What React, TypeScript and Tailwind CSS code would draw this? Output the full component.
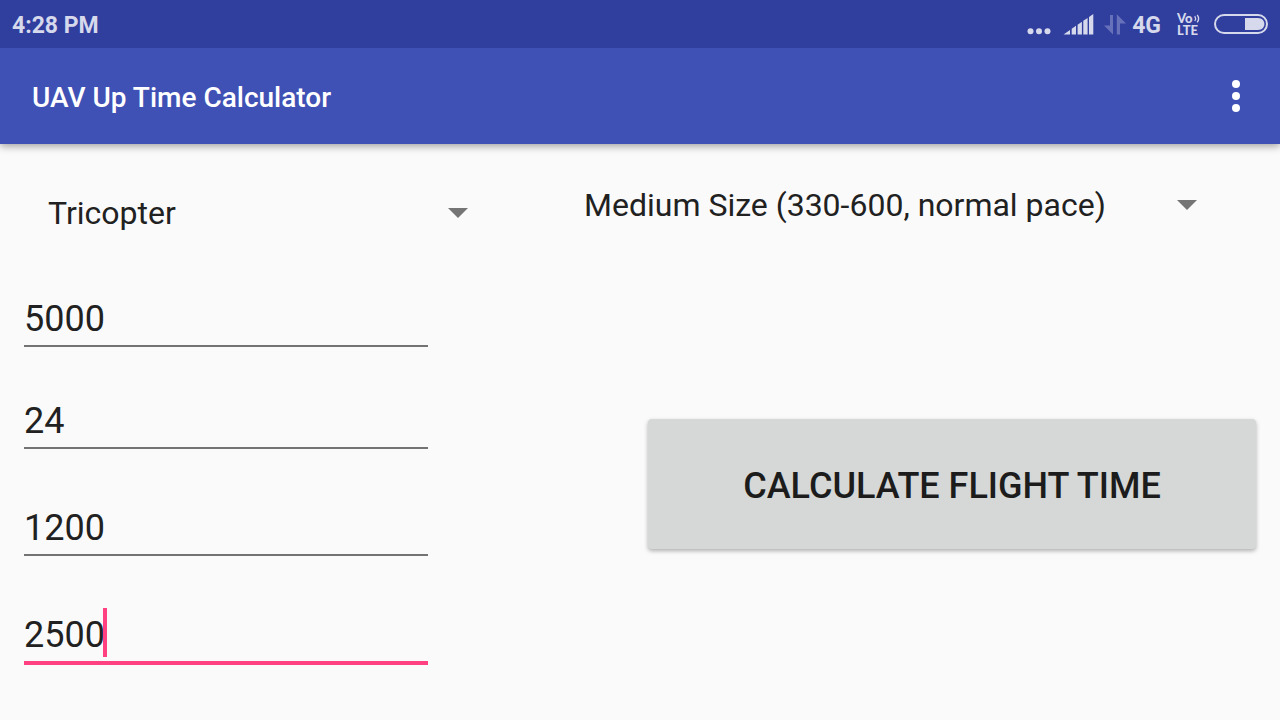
import { useState } from "react"

interface SpinnerProps {
  label: string;
  options: string[];
  className?: string;
}

interface NumberFieldProps {
  label: string;
  value: string;
  active: boolean;
  className?: string;
  onFocus: () => void;
  onChange: (value: string) => void;
}

const copterTypes = ["Tricopter", "Quadcopter", "Hexacopter", "Octocopter"]

const frameSizes = [
  "Medium Size (330-600, normal pace)",
  "Small Size (below 330, fast pace)",
  "Large Size (above 600, slow pace)",
]

function StatusBar() {
  return (
    <div className="relative z-10 flex h-12 items-center justify-between bg-[#303e9e] px-3 text-[#d6d9ec]">
      <span className="pt-1 text-[23px] font-bold">4:28 PM</span>
      <div className="flex items-center">
        <svg className="mr-3" width="24" height="24" viewBox="0 0 24 24" fill="currentColor" aria-hidden="true">
          <circle cx="3.5" cy="19.3" r="3" />
          <circle cx="12" cy="19.3" r="3" />
          <circle cx="20.5" cy="19.3" r="3" />
        </svg>
        <svg className="mr-2.5" width="31" height="24" viewBox="0 0 31 24" fill="currentColor" aria-hidden="true">
          <path d="M0.5 22.5L7 18V22.5ZM8.7 16.8L13 13.8V22.5H8.7ZM14.6 12.7L18.9 9.8V22.5H14.6ZM20.3 8.8L24.6 5.9V22.5H20.3ZM26 4.9L30.3 2V22.5H26Z" />
        </svg>
        <svg className="mr-1.5" width="22" height="24" viewBox="0 0 22 24" fill="#6771b9" aria-hidden="true">
          <path d="M0 13.6H6V3H9V22.4ZM12.8 22.4H16V11.4H22L12.8 2.2Z" />
        </svg>
        <span className="pt-1 text-[23px] font-bold">4G</span>
        <svg className="mr-3 ml-4 overflow-visible" width="25" height="24" viewBox="0 0 25 24" fill="currentColor" aria-hidden="true">
          <text fontSize="13" fontWeight="900" fontFamily="Lato, sans-serif">
            <tspan x="0" y="11">Vo</tspan>
            <tspan x="0" y="23">LTE</tspan>
          </text>
          <path d="M17.8 4.2Q19.4 6.6 17.8 9M20.2 2.8Q23 6.6 20.2 10.4" fill="none" stroke="currentColor" strokeWidth="1.3" />
        </svg>
        <svg width="54" height="24" viewBox="0 0 54 24" fill="none" aria-hidden="true">
          <rect x="1" y="3" width="52" height="18" rx="9" stroke="currentColor" strokeWidth="2" />
          <path d="M31 6H44C48 6 50.4 8.8 50.4 12S48 18 44 18H31Z" fill="currentColor" />
        </svg>
      </div>
    </div>
  )
}

function Spinner({ label, options, className }: SpinnerProps) {
  return (
    <div className={`relative ${className}`}>
      <select
        aria-label={label}
        className="h-12 w-full appearance-none bg-transparent pr-10 pl-4 text-[32px] leading-[48px] text-[#212121] outline-none"
      >
        {options.map((option) => (
          <option key={option}>{option}</option>
        ))}
      </select>
      <svg className="pointer-events-none absolute top-[19px] right-3" width="20" height="10" viewBox="0 0 20 10" aria-hidden="true">
        <path d="M0 0H20L10 10Z" fill="#757575" />
      </svg>
    </div>
  )
}

function NumberField({ label, value, active, className, onFocus, onChange }: NumberFieldProps) {
  return (
    <div
      className={`relative pb-1 text-4xl text-[#212121] ${
        active ? "border-b-4 border-[#ff4081]" : "border-b-2 border-[#737373]"
      } ${className}`}
    >
      <input
        type="text"
        inputMode="numeric"
        aria-label={label}
        className="block h-[49px] w-full bg-transparent pt-1 leading-[45px] caret-transparent outline-none"
        value={value}
        onFocus={onFocus}
        onChange={(e) => onChange(e.target.value)}
      />
      {active && (
        // One digit is exactly 1ch wide
        <span
          className="pointer-events-none absolute top-0 -ml-0.5 h-[49px] w-1 bg-[#ff4081]"
          style={{ left: `${value.length}ch` }}
        />
      )}
    </div>
  )
}

export default function App() {
  const [values, setValues] = useState(["5000", "24", "1200", "2500"])
  const [active, setActive] = useState(3)

  const fields = [
    { label: "Battery capacity (mAh)", className: "" },
    { label: "Propulsion (A)", className: "mt-[47px]" },
    { label: "Frame weight (g)", className: "mt-[52px]" },
    { label: "Payload weight (g)", className: "mt-[52px]" },
  ]

  const handleChange = (index: number, value: string) => {
    setValues(values.map((v, i) => (i === index ? value : v)))
  }

  return (
    <div className="flex min-h-screen flex-col bg-[#fafafa] font-[Roboto,sans-serif]">
      <StatusBar />
      <header className="flex h-24 items-center justify-between bg-[#3f51b5] px-8 text-white shadow-[0_2px_8px_rgba(0,0,0,0.38)]">
        <h1 className="pt-1 text-[28px] font-medium">UAV Up Time Calculator</h1>
        <button type="button" aria-label="More options" className="px-2 py-2">
          <svg width="8" height="32" viewBox="0 0 8 32" fill="currentColor" aria-hidden="true">
            <circle cx="4" cy="4" r="4" />
            <circle cx="4" cy="16" r="4" />
            <circle cx="4" cy="28" r="4" />
          </svg>
        </button>
      </header>

      <main className="flex flex-1">
        <section className="w-3/8 pt-[45px]">
          <Spinner label="Copter type" options={copterTypes} className="ml-8" />
          <div className="mt-[55px] mr-[52px] ml-6">
            {fields.map((field, index) => (
              <NumberField
                key={field.label}
                label={field.label}
                className={field.className}
                value={values[index]}
                active={active === index}
                onFocus={() => setActive(index)}
                onChange={(value) => handleChange(index, value)}
              />
            ))}
          </div>
        </section>

        <section className="flex-1 pt-[37px] pr-6 pl-[88px]">
          <Spinner label="Frame size" options={frameSizes} className="mr-[47px]" />
          <div className="mt-[190px] pl-20">
            <button
              type="button"
              className="h-[130px] w-full rounded-sm bg-[#d6d8d7] pt-1 text-4xl font-medium text-[#1c1c1c] shadow-[0_2px_4px_rgba(0,0,0,0.3)]"
            >
              CALCULATE FLIGHT TIME
            </button>
          </div>
        </section>
      </main>
    </div>
  )
}
